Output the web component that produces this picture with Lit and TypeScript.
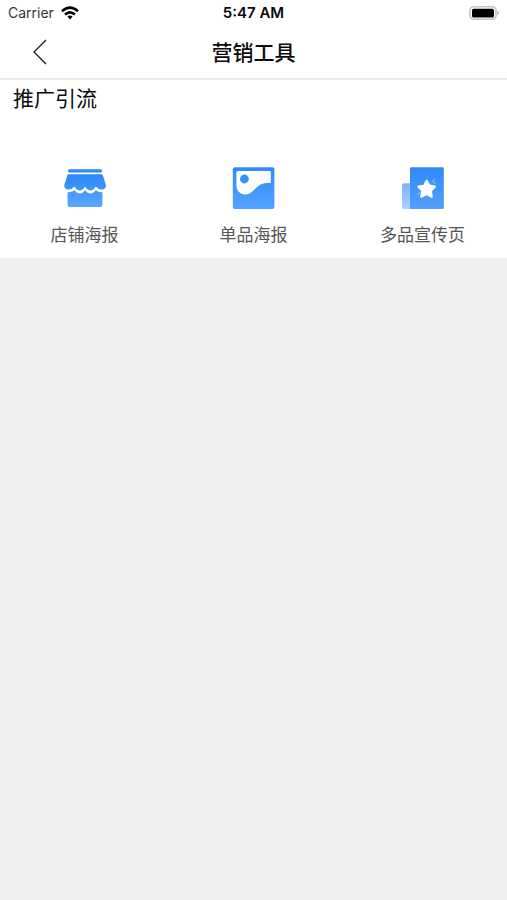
import { LitElement, html, css, svg } from "lit";
import { customElement } from "lit/decorators.js";

const shopIcon = svg`
  <defs>
    <linearGradient id="shop" x1="0" y1="0" x2="0" y2="1">
      <stop offset="0" stop-color="#4497fb" /><stop offset="1" stop-color="#5aa7ff" />
    </linearGradient>
    <linearGradient id="awning" x1="0" y1="0" x2="0" y2="1">
      <stop offset="0" stop-color="#2e87f8" /><stop offset="1" stop-color="#4196fc" />
    </linearGradient>
  </defs>
  <rect x="6" y="3.2" width="34" height="3.4" rx="1.5" fill="#2e88f6" />
  <path fill="url(#awning)" d="M6.8 8.2H39.4Q40.4 8.2 40.8 9.2L43.8 18.5Q44.4 23.6 39.6 23.6Q36.4 23.6 33.8 20.4Q31.6 24.4 28.4 24.4Q25.4 24.4 23.1 20.4Q20.8 24.4 17.8 24.4Q14.6 24.4 12.4 20.4Q9.8 23.6 6.6 23.6Q1.8 23.6 2.4 18.5L5.4 9.2Q5.8 8.2 6.8 8.2Z" />
  <path fill="url(#shop)" d="M5.6 26.2Q9.6 26.6 12.4 24.2Q14.8 27.4 17.8 27.4Q20.8 27.4 23.1 24.2Q25.4 27.4 28.4 27.4Q31.4 27.4 33.8 24.2Q36.4 26.6 40.4 26.2V39Q40.4 41 38.4 41H7.6Q5.6 41 5.6 39Z" />`;

const posterIcon = svg`
  <defs>
    <linearGradient id="poster" x1="0" y1="0" x2="0" y2="1">
      <stop offset="0" stop-color="#2f8afa" /><stop offset="1" stop-color="#55a3ff" />
    </linearGradient>
  </defs>
  <rect x="1.8" y="1.3" width="41.6" height="41.6" rx="2" fill="url(#poster)" />
  <path fill="#fff" d="M6.8 5H38.8Q39.8 5 39.8 6V17C32 16.6 28.6 18.4 25 22C21.5 25.5 19 28.4 14.5 28.4C8.6 28.4 5.4 24.5 5.4 19V6.5Q5.4 5 6.8 5Z" />
  <circle cx="13.4" cy="13" r="4.4" fill="#3990fb" />`;

const leafletIcon = svg`
  <defs>
    <linearGradient id="page" x1="0" y1="0" x2="0" y2="1">
      <stop offset="0" stop-color="#2e8afa" /><stop offset="1" stop-color="#559fff" />
    </linearGradient>
    <linearGradient id="fold" x1="0" y1="0" x2="0" y2="1">
      <stop offset="0" stop-color="#7ab4fb" /><stop offset="1" stop-color="#acd2ff" />
    </linearGradient>
  </defs>
  <path fill="url(#fold)" d="M4.6 17.2H11V42.9H4.6Q2 42.9 2 40V20Q2 17.2 4.6 17.2Z" />
  <rect x="10" y="1.3" width="33.8" height="41.6" rx="1.2" fill="url(#page)" />
  <path fill="#fff" stroke="#fff" stroke-width="2" stroke-linejoin="round" d="M26.6 14.6L29.3 19.6L35 20.6L31 24.8L31.8 30.8L26.6 28.2L21.2 30.8L22.3 24.8L18.2 20.6L24 19.8Z" />
  <path fill="none" stroke="#a4cdff" stroke-width="1" stroke-linecap="round" d="M32 16.5L34.6 13.4M34 17.6L35.4 16.6M18 28.6L20 26.4" />`;

const tools = [
  { label: "店铺海报", icon: shopIcon },
  { label: "单品海报", icon: posterIcon },
  { label: "多品宣传页", icon: leafletIcon },
];

@customElement("app-root")
export class AppRoot extends LitElement {
  static styles = css`
    :host {
      display: block;
      min-height: 100vh;
      background: #f0f0f0;
      color: #0a0a0a;
      font-family: "Inter", "Noto Sans CJK SC", sans-serif;
    }
    .status {
      display: grid;
      grid-template-columns: 1fr auto 1fr;
      align-items: center;
      height: 26px;
      padding: 0 8px;
      background: #fff;
      font-size: 14px;
      line-height: 26px;
    }
    .carrier {
      display: flex;
      align-items: center;
      gap: 7px;
      color: #333;
    }
    .time {
      font-size: 15px;
      font-weight: 600;
    }
    .battery {
      justify-self: end;
    }
    .nav {
      display: grid;
      grid-template-columns: 80px 1fr 80px;
      align-items: center;
      height: 52px;
      background: #fff;
      border-bottom: 2px solid #ebebeb;
    }
    .back {
      display: flex;
      justify-content: center;
      padding: 8px 0;
      border: 0;
      background: none;
      cursor: pointer;
    }
    h1,
    h2 {
      margin: 0;
      font-size: 21px;
      line-height: 38px;
    }
    h1 {
      padding-top: 2px;
      font-weight: 500;
      text-align: center;
    }
    h2 {
      padding: 0 13px;
      font-weight: 400;
    }
    .panel {
      background: #fff;
    }
    .tools {
      display: grid;
      grid-template-columns: repeat(3, 1fr);
      padding-top: 48px;
    }
    .tool {
      display: flex;
      flex-direction: column;
      align-items: center;
      gap: 13px;
      padding: 0 0 11px;
      border: 0;
      background: none;
      color: #555;
      font: inherit;
      font-size: 17px;
      line-height: 24px;
      cursor: pointer;
    }
    svg {
      display: block;
    }
  `;

  render() {
    return html`
      <div class="status">
        <div class="carrier">
          <span>Carrier</span>
          <svg width="18" height="14" viewBox="0 0 18 14" fill="none" stroke="#000" stroke-width="2.6" aria-hidden="true">
            <path d="M1 5.2Q9 -1.8 17 5.2" />
            <path d="M4 8.5Q9 4.2 14 8.5" />
            <path d="M6.4 10.6Q9 8.6 11.6 10.6L9 13.4Z" fill="#000" stroke="none" />
          </svg>
        </div>
        <span class="time">5:47 AM</span>
        <svg class="battery" width="30" height="14" viewBox="0 0 30 14" aria-hidden="true">
          <rect x="1" y="0.8" width="26" height="12.4" rx="3.6" fill="#fff" stroke="#c4c4c4" stroke-width="1.6" />
          <rect x="3" y="2.7" width="22" height="8.8" rx="1.6" fill="#000" />
          <path d="M28.4 4.8Q30 5.4 30 7T28.4 9.2Z" fill="#b4b4b4" />
        </svg>
      </div>
      <header class="nav">
        <button class="back" aria-label="返回">
          <svg width="14" height="26" viewBox="0 0 14 26" fill="none" stroke="#222" stroke-width="1.4">
            <path d="M13 1L1 13L13 25" />
          </svg>
        </button>
        <h1>营销工具</h1>
      </header>
      <section class="panel">
        <h2>推广引流</h2>
        <div class="tools">
          ${tools.map(
            (tool) => html`
              <button class="tool">
                <svg width="44" height="44" viewBox="1 0 44 44" aria-hidden="true">${tool.icon}</svg>
                <span>${tool.label}</span>
              </button>
            `
          )}
        </div>
      </section>
    `;
  }
}
